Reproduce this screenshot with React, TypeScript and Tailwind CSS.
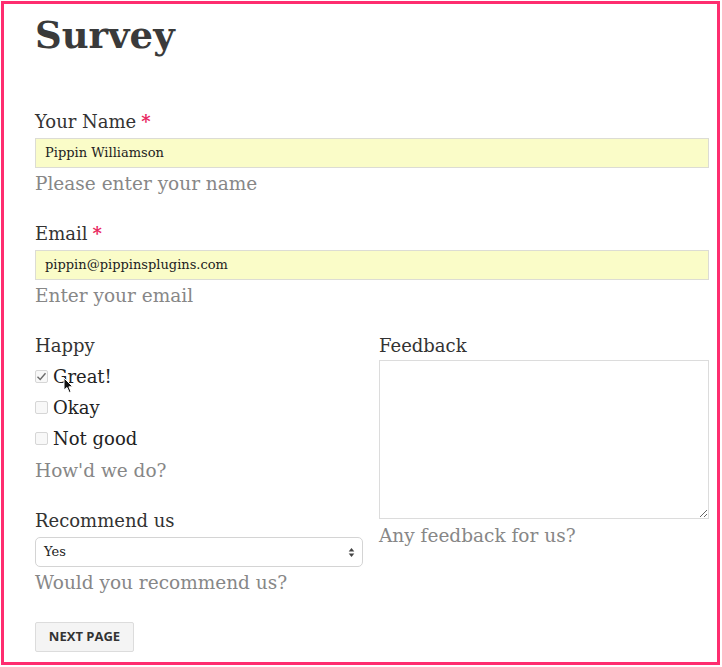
const serif = "font-['DejaVu_Serif',serif]";

const Label = ({ text, required }: { text: string; required?: boolean }) => (
  <div className="h-[24px] text-[18px] leading-[24px] text-[#333]">
    {text}
    {required && <span className="ml-[5px] font-bold text-[#e8275f]">*</span>}
  </div>
);

const Help = ({ text, className = "" }: { text: string; className?: string }) => (
  <div className={"h-[24px] text-[18.5px] leading-[24px] text-[#878787] " + className}>{text}</div>
);

const TextField = ({ label, value, help }: { label: string; value: string; help: string }) => (
  <div className="mb-[26px]">
    <Label text={label} required />
    <div className="mt-[4px] flex h-[30px] items-center border border-[#dcdcd4] bg-[#fafcc8] pl-[9px] text-[13px] text-[#222]">
      {value}
    </div>
    <Help text={help} className="mt-[4px]" />
  </div>
);

const Check = ({ label, checked }: { label: string; checked?: boolean }) => (
  <div className="flex h-[31px] items-center gap-[5px] text-[18px] leading-[31px] text-[#222]">
    <span className="flex h-[13px] w-[13px] items-center justify-center rounded-[2px] border border-[#d6d6d6] bg-[#f8f8f8]">
      {checked && (
        <svg width="11" height="11" viewBox="0 0 11 11" fill="none">
          <path d="M1.5 5.8 L4.2 8.4 L9.5 2.2" stroke="#6b6b6b" strokeWidth="1.4" />
        </svg>
      )}
    </span>
    {label}
  </div>
);

export default function App() {
  return (
    <div className={"m-[1px] h-[664px] w-[719px] border-[3px] border-[#fe2d6f] bg-white pl-[31px] pr-[8px] pt-[9px] " + serif}>
      <h1 className="h-[44px] text-[37px] font-bold leading-[44px] text-[#3a3a3a]">Survey</h1>

      <div className="mt-[53px]">
        <TextField label="Your Name" value="Pippin Williamson" help="Please enter your name" />
        <TextField label="Email" value="pippin@pippinsplugins.com" help="Enter your email" />

        <div className="grid grid-cols-[328px_330px] gap-x-[16px]">
          <div>
            <Label text="Happy" />
            <div className="relative mt-[3px]">
              <Check label="Great!" checked />
              <Check label="Okay" />
              <Check label="Not good" />
              <svg className="absolute left-[28px] top-[16px]" width="11" height="17" viewBox="0 0 11 17">
                <path d="M1 1 L1 13 L4 10.5 L6.2 15.5 L8 14.7 L5.9 9.8 L9.8 9.8 Z" fill="#111" stroke="#fff" strokeWidth="1" />
              </svg>
            </div>
            <Help text="How'd we do?" className="mt-[5px]" />

            <div className="mt-[26px]">
              <Label text="Recommend us" />
              <div className="mt-[4px] flex h-[30px] items-center justify-between rounded-[5px] border border-[#d4d4d4] bg-white pl-[8px] pr-[7px] text-[13px] text-[#222]">
                <span>Yes</span>
                <svg width="7" height="11" viewBox="0 0 7 11">
                  <path d="M3.5 1 L6.3 4.4 L0.7 4.4 Z" fill="#444" />
                  <path d="M3.5 10 L6.3 6.6 L0.7 6.6 Z" fill="#444" />
                </svg>
              </div>
              <Help text="Would you recommend us?" className="mt-[4px]" />
            </div>

            <button className="mt-[27px] h-[30px] w-[99px] rounded-[2px] border border-[#dcdcdc] bg-[#f4f4f4] font-['Open_Sans',sans-serif] text-[13px] font-bold text-[#333]">
              NEXT PAGE
            </button>
          </div>

          <div>
            <Label text="Feedback" />
            <textarea className="mt-[2px] block h-[159px] w-full border border-[#dcdcdc] bg-white outline-none" />
            <Help text="Any feedback for us?" className="mt-[5px]" />
          </div>
        </div>
      </div>
    </div>
  );
}
